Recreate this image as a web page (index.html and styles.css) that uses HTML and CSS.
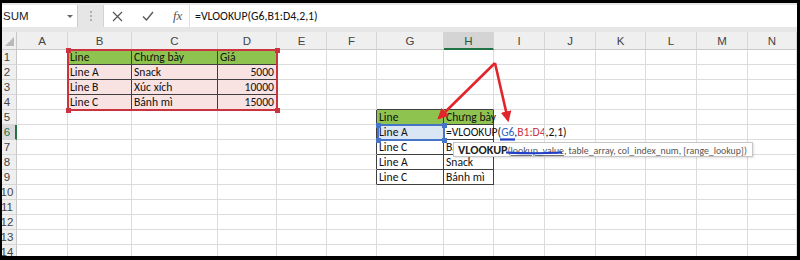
FILE: index.html
```html
<!DOCTYPE html>
<html lang="vi">
<head>
  <meta charset="UTF-8" />
  <title>VLOOKUP</title>
  <link rel="stylesheet" href="styles.css">
</head>
<body>
  <div class="frame">
    <div class="fbar">
      <div class="namebox">SUM <span class="caret"></span></div>
      <div class="grip"><span></span><span></span><span></span></div>
      <div class="fbox">
        <div class="btns">
          <svg width="11" height="11" viewBox="0 0 11 11"><path d="M1 1L10 10M10 1L1 10" stroke="#555" stroke-width="1.2" fill="none"/></svg>
          <svg width="12" height="10" viewBox="0 0 12 10"><path d="M1 5.5L4.5 9L11 1" stroke="#555" stroke-width="1.3" fill="none"/></svg>
          <span class="fx">fx</span>
        </div>
        <div class="formula">=VLOOKUP(G6,B1:D4,2,1)</div>
      </div>
    </div>

    <div class="sheet" id="sheet">
      <div class="range-red">
        <i class="h tl"></i><i class="h tr"></i><i class="h bl"></i><i class="h br"></i>
      </div>
      <div class="range-blue">
        <i class="h tl"></i><i class="h tr"></i><i class="h bl"></i><i class="h br"></i>
      </div>
      <div class="tip"><b>VLOOKUP</b>(<u>lookup_value</u>, table_array, col_index_num, [range_lookup])</div>
    </div>

    <svg class="marks" width="795" height="253" viewBox="2 3 795 253">
      <defs>
        <marker id="head" viewBox="0 0 10 10" refX="8" refY="5" markerWidth="4.2" markerHeight="4.2" orient="auto">
          <path d="M0 0L10 5L0 10z" fill="#e2242b"/>
        </marker>
      </defs>
      <path d="M495 63L439 118" stroke="#e2242b" stroke-width="2.6" fill="none" marker-end="url(#head)"/>
      <path d="M495 63L508 120" stroke="#e2242b" stroke-width="2.6" fill="none" marker-end="url(#head)"/>
      <path d="M500 139.5L515 139.5" stroke="#1f3fc9" stroke-width="2.2"/>
      <path d="M506 152.5Q534 154 562 152.5" stroke="#1f3fc9" stroke-width="2.2" fill="none"/>
    </svg>
  </div>

  <script>
    const cols = ["A","B","C","D","E","F","G","H","I","J","K","L","M","N"];
    const data = {
      B1: "Line", C1: "Chưng bày", D1: "Giá",
      B2: "Line A", C2: "Snack", D2: "5000",
      B3: "Line B", C3: "Xúc xích", D3: "10000",
      B4: "Line C", C4: "Bánh mì", D4: "15000",
      G5: "Line", H5: "Chưng bày",
      G6: "Line A",
      G7: "Line C", H7: "Bánh mì",
      G8: "Line A", H8: "Snack",
      G9: "Line C", H9: "Bánh mì"
    };
    const green = ["B1","C1","D1","G5","H5"];
    const nums = ["D2","D3","D4"];
    // bordered tables: [firstCol, firstRow, lastCol, lastRow]
    const tables = [[1,1,3,4],[6,5,7,9]];
    const activeCol = 7, activeRow = 6;

    const sheet = document.getElementById("sheet");
    const first = sheet.firstChild;
    const add = (cls, html) => {
      const d = document.createElement("div");
      d.className = cls;
      if (html) d.innerHTML = html;
      sheet.insertBefore(d, first);
      return d;
    };

    add("corner");
    cols.forEach((c, i) => add("colhead" + (i === activeCol ? " on" : ""), c));

    for (let r = 1; r <= 14; r++) {
      add("rowhead" + (r === activeRow ? " on" : ""), `<span>${r}</span>`);
      cols.forEach((c, i) => {
        const ref = c + r;
        let cls = "cell";
        tables.forEach(([c1, r1, c2, r2]) => {
          const inCols = i >= c1 && i <= c2, inRows = r >= r1 && r <= r2;
          if (inCols && inRows) cls += " dr db";
          if (i === c1 - 1 && inRows) cls += " dr";
          if (r === r1 - 1 && inCols) cls += " db";
        });
        if (green.includes(ref)) cls += " green";
        else if (c >= "B" && c <= "D" && r >= 2 && r <= 4) cls += " pink";
        if (nums.includes(ref)) cls += " num";
        if (ref === "G6") cls += " sel";
        let html = data[ref] || "";
        if (ref === "H6") {
          html = '=VLOOKUP(<span class="ref-b">G6</span>,<span class="ref-r">B1:D4</span>,2,1)';
          cls += " editing";
        }
        add(cls, html);
      });
    }
  </script>
</body>
</html>
```

FILE: styles.css
```css
body {
  margin: 0;
  background: #000;
  font-family: "Liberation Sans", Arial, sans-serif;
}
.frame {
  position: relative;
  width: 795px;
  height: 253px;
  margin: 3px 0 0 2px;
  background: #fff;
  overflow: hidden;
}

/* formula bar */
.fbar {
  display: flex;
  height: 29px;
  box-sizing: border-box;
  padding: 2px 0 5px;
  background: #e6e6e6;
}
.namebox {
  width: 76px;
  box-sizing: border-box;
  display: flex;
  align-items: center;
  justify-content: space-between;
  padding: 0 4px 0 1px;
  background: #fff;
  border-right: 1px solid #cbcbcb;
  font-size: 11.5px;
  color: #222;
}
.caret {
  border-left: 3px solid transparent;
  border-right: 3px solid transparent;
  border-top: 3px solid #666;
}
.grip {
  width: 25px;
  display: flex;
  flex-direction: column;
  align-items: center;
  justify-content: center;
  gap: 2px;
}
.grip span {
  width: 2px;
  height: 2px;
  background: #b0b0b0;
}
.fbox {
  flex: 1;
  display: flex;
  align-items: center;
  background: #fff;
  border-left: 1px solid #d3d3d3;
}
.btns {
  width: 86px;
  height: 100%;
  box-sizing: border-box;
  display: flex;
  align-items: center;
  gap: 19px;
  padding-left: 8px;
  border-right: 1px solid #e0e0e0;
}
.fx {
  font-family: "Liberation Serif", serif;
  font-style: italic;
  font-size: 13px;
  color: #555;
}
.formula {
  padding-left: 5px;
  font-family: "Carlito", "Lato", sans-serif;
  font-size: 11.8px;
  color: #111;
}

/* sheet */
.sheet {
  position: relative;
  display: grid;
  grid-template-columns: 15px 51px 64px 86px 59px 50px 50px 67px 50px 51px 51px 50px 51px 51px 49px;
  grid-template-rows: 18px repeat(14, 15px);
}
.corner {
  position: relative;
  background: #efefef;
  border-right: 1px solid #c8c8c8;
  border-bottom: 1px solid #c8c8c8;
}
.corner::after {
  content: "";
  position: absolute;
  right: 2px;
  bottom: 3px;
  width: 9px;
  height: 9px;
  background: #b9b9b9;
  clip-path: polygon(100% 0, 100% 100%, 0 100%);
}
.colhead {
  background: #efefef;
  border-right: 1px solid #d6d6d6;
  border-bottom: 1px solid #c8c8c8;
  text-align: center;
  font-size: 11.5px;
  line-height: 18px;
  color: #444;
}
.colhead.on {
  background: #d4d4d4;
  border-bottom: 2px solid #217346;
  color: #1e5a39;
}
.rowhead {
  overflow: hidden;
  background: #efefef;
  border-right: 1px solid #c8c8c8;
  border-bottom: 1px solid #d6d6d6;
  font-size: 11.5px;
  line-height: 15px;
  color: #444;
}
.rowhead span {
  display: block;
  width: 24px;
  margin-left: -7px;
  text-align: center;
}
.rowhead.on {
  background: #d9d9d9;
  border-right: 2px solid #217346;
  color: #217346;
}
.cell {
  box-sizing: border-box;
  padding: 0 2px;
  border-right: 1px solid #dcdcdc;
  border-bottom: 1px solid #dcdcdc;
  font-family: "Carlito", "Lato", sans-serif;
  font-size: 11.6px;
  line-height: 15px;
  color: #111;
  white-space: nowrap;
}
.cell.dr { border-right-color: #3f3f3f; }
.cell.db { border-bottom-color: #3f3f3f; }
.cell.green { background: #8fc350; }
.cell.pink { background: #f9e2e2; }
.cell.num { text-align: right; }
.cell.sel { background: #dbe6f4; }
.cell.editing { overflow: visible; }
.ref-b { color: #3566c4; }
.ref-r { color: #c8374a; }

/* range highlights drawn over the cells */
.range-red, .range-blue {
  position: absolute;
  box-sizing: border-box;
}
.range-red {
  left: 65px;
  top: 17px;
  width: 211px;
  height: 62px;
  border: 2px solid #cc3340;
}
.range-blue {
  left: 375px;
  top: 92px;
  width: 68px;
  height: 17px;
  border: 2px solid #4674c6;
}
.h {
  position: absolute;
  width: 5px;
  height: 5px;
}
.range-red .h { background: #cc3340; }
.range-blue .h { background: #4674c6; }
.h.tl { left: -3.5px; top: -3.5px; }
.h.tr { right: -3.5px; top: -3.5px; }
.h.bl { left: -3.5px; bottom: -3.5px; }
.h.br { right: -3.5px; bottom: -3.5px; }

.tip {
  position: absolute;
  left: 451px;
  top: 110px;
  width: 300px;
  height: 15px;
  box-sizing: border-box;
  padding-left: 4px;
  background: #fff;
  border: 1px solid #c6c6c6;
  box-shadow: 1px 1px 2px rgba(0,0,0,0.12);
  font-family: "Carlito", "Lato", sans-serif;
  font-size: 9.8px;
  line-height: 13px;
  color: #555;
  white-space: nowrap;
}
.tip b {
  font-size: 12.2px;
  color: #222;
}
.tip u {
  text-decoration-color: #777;
}

.marks {
  position: absolute;
  left: 0;
  top: 0;
  pointer-events: none;
}
```
